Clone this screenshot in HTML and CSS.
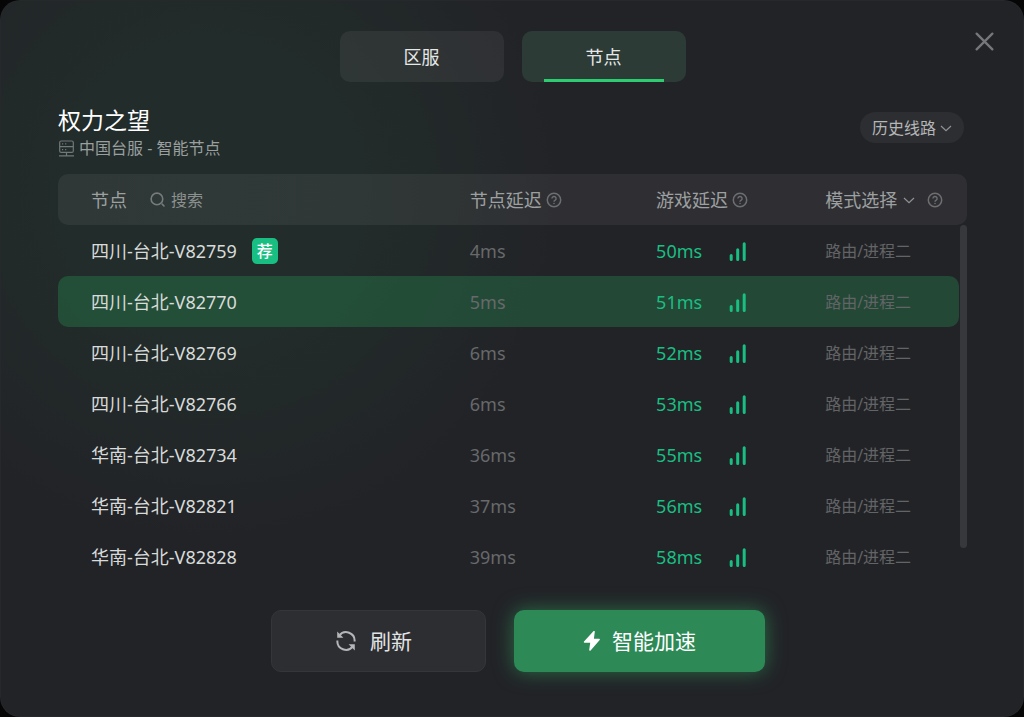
FILE: index.html
```html
<!DOCTYPE html>
<html lang="zh-CN">
<head>
<meta charset="utf-8">
<title>节点选择</title>
<link rel="stylesheet" href="styles.css">
</head>
<body>
<svg class="sprite" aria-hidden="true">
  <symbol id="help" viewBox="0 0 16 16"><circle cx="8" cy="8" r="6.7" fill="none" stroke="currentColor" stroke-width="1.5"/><path d="M5.9 6.6a2.1 2.1 0 1 1 3.1 1.8c-.7.4-1 .7-1 1.3" fill="none" stroke="currentColor" stroke-width="1.4"/><circle cx="8" cy="11.5" r=".8" fill="currentColor"/></symbol>
  <symbol id="chevron" viewBox="0 0 12 12"><path d="M1 4l5 4.600L11 4" fill="none" stroke="currentColor" stroke-width="1.200"/></symbol>
  <symbol id="signal" viewBox="0 0 18 20"><path d="M2.200 14.500v4M8.700 8.800v9.700M15.200 2.800v15.700" fill="none" stroke="currentColor" stroke-width="3" stroke-linecap="round"/></symbol>
</svg>
<main class="dialog">
  <button class="close" type="button" aria-label="关闭"><svg viewBox="0 0 20 20"><path d="M2.500 2.500l15 15M17.500 2.500l-15 15" fill="none" stroke="currentColor" stroke-width="2.200" stroke-linecap="round"/></svg></button>
  <nav class="tabs">
    <button class="tab" type="button">区服</button>
    <button class="tab active" type="button">节点</button>
  </nav>
  <header class="head">
    <div class="info">
      <h1 class="title">权力之望</h1>
      <p class="subtitle"><svg class="server" viewBox="0 0 16 17"><g fill="none" stroke="currentColor" stroke-width="1.200"><rect x="1.200" y="1" width="13.600" height="11.400" rx="1.500"/><path d="M1.200 6.700h13.600M8 12.400v3M.5 15.800h15"/><path d="M3.500 3.900h1.200M6.600 3.900h1.200M3.500 9.600h1.200M6.600 9.600h1.200"/></g></svg>中国台服 - 智能节点</p>
    </div>
    <label class="picker history">
      <select aria-label="历史线路"><option>历史线路</option></select>
      <svg class="chevron"><use href="#chevron"/></svg>
    </label>
  </header>
  <table class="nodes">
    <colgroup><col class="c-name"><col class="c-delay"><col class="c-game"><col class="c-mode"><col class="c-scroll"></colgroup>
    <thead>
      <tr>
        <th><div class="cell">节点<label class="search"><svg viewBox="0 0 16 16"><g fill="none" stroke="currentColor" stroke-width="1.700" stroke-linecap="round"><circle cx="7.400" cy="7.400" r="6.200"/><path d="M13 13l1.900 1.900"/></g></svg><input type="text" placeholder="搜索" aria-label="搜索"></label></div></th>
        <th><div class="cell">节点延迟<svg class="help"><use href="#help"/></svg></div></th>
        <th><div class="cell">游戏延迟<svg class="help"><use href="#help"/></svg></div></th>
        <th colspan="2"><div class="cell"><label class="picker mode"><select aria-label="模式选择"><option>模式选择</option></select><svg class="chevron"><use href="#chevron"/></svg></label><svg class="help"><use href="#help"/></svg></div></th>
      </tr>
    </thead>
    <tbody>
      <tr><td><div class="cell">四川-台北-V82759<span class="badge">荐</span></div></td><td class="delay">4ms</td><td class="game"><div class="cell">50ms<svg class="signal"><use href="#signal"/></svg></div></td><td class="type">路由/进程二</td><td class="scroll" rowspan="7"><div class="thumb"></div></td></tr>
      <tr class="selected"><td>四川-台北-V82770</td><td class="delay">5ms</td><td class="game"><div class="cell">51ms<svg class="signal"><use href="#signal"/></svg></div></td><td class="type">路由/进程二</td></tr>
      <tr><td>四川-台北-V82769</td><td class="delay">6ms</td><td class="game"><div class="cell">52ms<svg class="signal"><use href="#signal"/></svg></div></td><td class="type">路由/进程二</td></tr>
      <tr><td>四川-台北-V82766</td><td class="delay">6ms</td><td class="game"><div class="cell">53ms<svg class="signal"><use href="#signal"/></svg></div></td><td class="type">路由/进程二</td></tr>
      <tr><td>华南-台北-V82734</td><td class="delay">36ms</td><td class="game"><div class="cell">55ms<svg class="signal"><use href="#signal"/></svg></div></td><td class="type">路由/进程二</td></tr>
      <tr><td>华南-台北-V82821</td><td class="delay">37ms</td><td class="game"><div class="cell">56ms<svg class="signal"><use href="#signal"/></svg></div></td><td class="type">路由/进程二</td></tr>
      <tr><td>华南-台北-V82828</td><td class="delay">39ms</td><td class="game"><div class="cell">58ms<svg class="signal"><use href="#signal"/></svg></div></td><td class="type">路由/进程二</td></tr>
    </tbody>
  </table>
  <footer class="actions">
    <button class="btn refresh" type="button"><svg viewBox="0 0 20 20"><g fill="none" stroke="currentColor" stroke-width="2"><path d="M3.200 4.600A8.600 8.600 0 0 1 18.600 10.500M16.800 15.400A8.600 8.600 0 0 1 1.400 9.500"/></g><path d="M1.200.6v6.200h6.200zM18.800 19.400v-6.200h-6.200z" fill="currentColor"/></svg>刷新</button>
    <button class="btn boost" type="button"><svg viewBox="0 0 20 20"><path d="M11.400.3L2 10.600c-.4.500-.1 1.100.5 1.100h5.700l-1 7.200c-.1 1 .8 1.300 1.400.5l9.100-10.500c.4-.5.100-1.100-.5-1.100h-5.300l.9-7c.1-.9-.8-1.200-1.400-.5z" fill="currentColor"/></svg>智能加速</button>
  </footer>
</main>
</body>
</html>
```
FILE: styles.css
```css
* { box-sizing: border-box; }
body {
  margin: 0;
  background: #060606;
  color: #d8dbda;
  font: 18px/24px "Noto Sans", "Noto Sans CJK SC", sans-serif;
}
button, input, select {
  margin: 0;
  padding: 0;
  border: 0;
  background: none;
  color: inherit;
  font: inherit;
}
svg { display: block; flex: none; }
.sprite { position: absolute; width: 0; height: 0; }
.dialog {
  position: relative;
  min-height: 100vh;
  padding: 31px 57px 45px 58px;
  border-radius: 20px;
  background: radial-gradient(circle at 210px 190px, #222d2b 0, #222c2a 150px, #222327 350px) #222327;
  box-shadow: inset 0 0 0 1px #26282b;
}
.close {
  position: absolute;
  top: 31px;
  right: 29px;
  color: #76777a;
}
.close svg { width: 21px; height: 21px; }
.tabs { display: flex; justify-content: center; gap: 18px; }
.tab {
  width: 164px;
  height: 51px;
  border-radius: 10px;
  background: rgba(255, 255, 255, .06);
  color: #e6e8e8;
}
.tab.active {
  background: linear-gradient(#2ecc71, #2ecc71) center bottom / 120px 3px no-repeat, #2c3b36;
}
.head {
  display: flex;
  justify-content: space-between;
  align-items: flex-start;
  margin: 22px 3px 13px 0;
}
.title {
  margin: 0;
  color: #fff;
  font-size: 23px;
  font-weight: 400;
  line-height: 32px;
}
.subtitle {
  display: flex;
  align-items: center;
  gap: 4px;
  margin: 0;
  color: #9a9f9f;
  font-size: 16px;
  line-height: 25px;
}
.server { width: 17px; height: 17px; color: #727978; }
.picker { display: flex; align-items: center; }
.picker select { appearance: none; outline: 0; }
.picker option { background: #2d2e32; }
.chevron { width: 12px; height: 12px; color: #909294; }
.history {
  gap: 3px;
  height: 31px;
  margin-top: 8px;
  padding: 0 12px;
  border-radius: 16px;
  background: #2d2e32;
  color: #b4b6b7;
  font-size: 16px;
}
.nodes {
  width: 100%;
  border-spacing: 0;
  table-layout: fixed;
}
.c-name { width: 45.3%; }
.c-delay { width: 20.5%; }
.c-game { width: 18.6%; }
.c-scroll { width: 8px; }
.nodes th, .nodes td {
  height: 51px;
  padding: 0;
  text-align: left;
  font-weight: 400;
  white-space: nowrap;
}
.nodes th { background: rgba(255, 255, 255, .06); color: #9da0a1; }
.nodes th:first-child { border-radius: 10px 0 0 10px; }
.nodes th:last-child { border-radius: 0 10px 10px 0; }
.nodes th:first-child, .nodes td:first-child { padding-left: 33px; }
.cell { display: flex; align-items: center; }
.help { width: 16px; height: 16px; margin-left: 4px; color: #6c6e70; }
.search {
  display: flex;
  align-items: center;
  gap: 6px;
  margin-left: 23px;
  font-size: 16px;
}
.search svg { width: 15px; height: 15px; color: #767c7b; }
.search input { width: 120px; outline: 0; }
.search input::placeholder { color: #8c9190; opacity: 1; }
.mode { gap: 6px; }
.mode + .help { margin-left: 12px; }
.badge {
  width: 26px;
  height: 26px;
  margin-left: 15px;
  border-radius: 5px;
  background: #19bf82;
  color: #fff;
  font-size: 16px;
  font-weight: 500;
  line-height: 26px;
  text-align: center;
}
.delay { color: #67696b; }
.game { color: #19bf82; }
.signal { width: 18px; height: 20px; margin-left: 27px; }
.nodes .type { color: #626466; font-size: 16px; }
.selected td { background: rgba(39, 174, 96, .27); }
.selected td:first-child { border-radius: 10px 0 0 10px; }
.selected td:last-child { border-radius: 0 10px 10px 0; }
.nodes td.scroll { padding-left: 1px; vertical-align: top; }
.thumb { height: 323px; border-radius: 4px; background: #37383c; }
.actions {
  display: flex;
  justify-content: center;
  gap: 28px;
  margin: 28px 0 0 10px;
}
.btn {
  display: flex;
  align-items: center;
  justify-content: center;
  height: 62px;
  border-radius: 10px;
  font-size: 21px;
}
.btn svg { width: 20px; height: 20px; }
.refresh {
  gap: 14px;
  width: 215px;
  padding-right: 8px;
  border: 1px solid #35363a;
  background: #2d2e32;
  color: #e2e3e4;
}
.refresh svg { color: #b4b6b7; }
.boost {
  gap: 10px;
  width: 251px;
  background: #2d8a57;
  color: #fff;
  box-shadow: 0 0 20px rgba(46, 160, 95, .6);
}
```
